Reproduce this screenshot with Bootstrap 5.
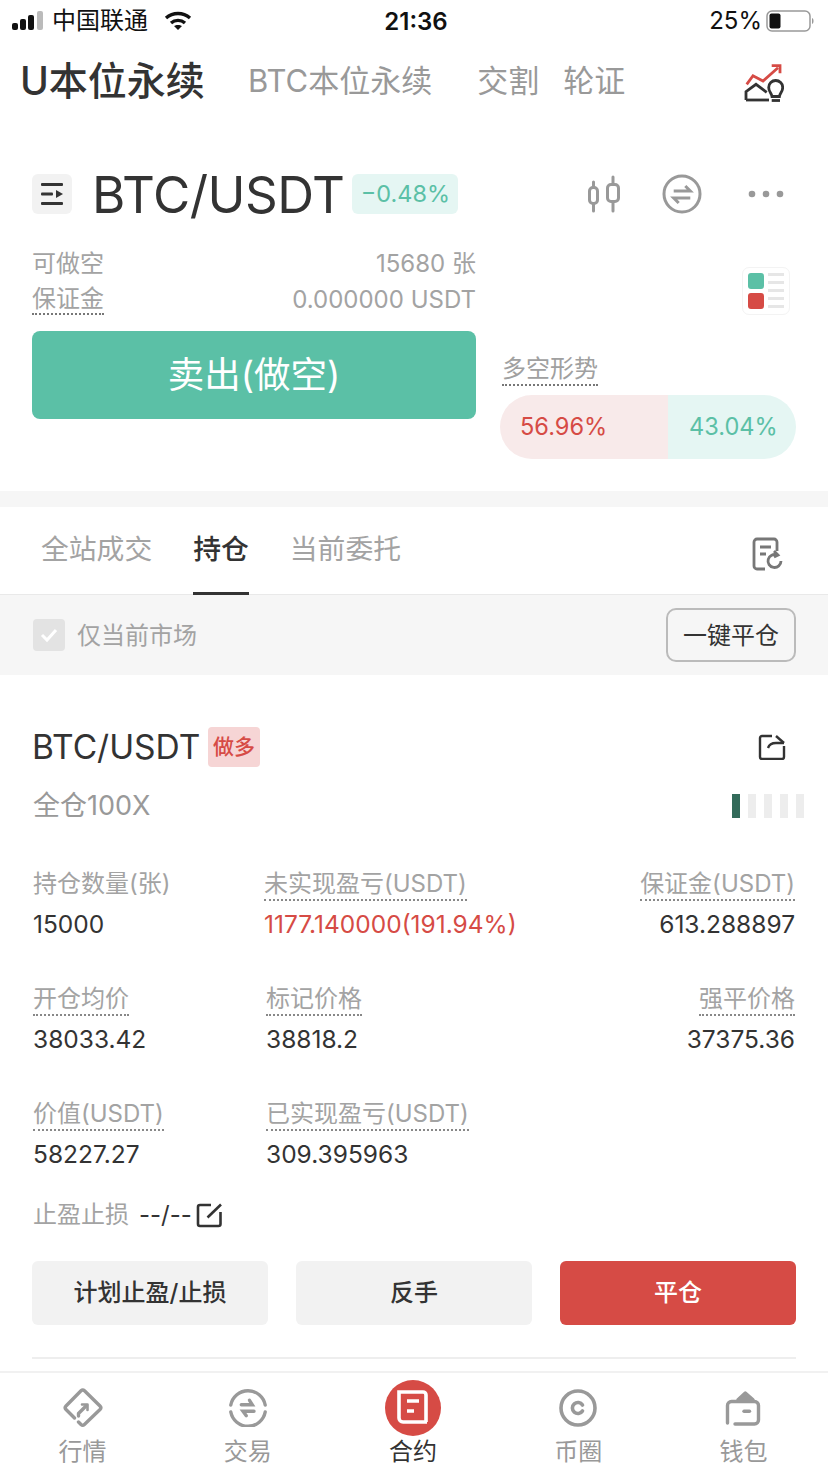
<!DOCTYPE html>
<html lang="zh">
<head>
  <meta charset="UTF-8">
  <title>BTC/USDT</title>
  <link href="https://cdn.jsdelivr.net/npm/bootstrap@5.3.2/dist/css/bootstrap.min.css" rel="stylesheet">
  <style>
    body { margin: 0; width: 828px; height: 1472px; overflow: hidden; background: #fff; color: #333;
      font-family: Inter, "Noto Sans CJK SC", sans-serif; }
    .status-bar { height: 42px; padding: 0 12px; font-size: 24px; color: #111; }
    .status-time { position: absolute; left: 4px; right: 0; text-align: center; font-weight: 600; top: 4px; }
    .top-tabs { height: 78px; padding: 0 44px 0 20px; }
    .top-main { font-size: 39px; font-weight: 500; color: #333; width: 228px; white-space: nowrap; }
    .top-sub { font-size: 31px; color: #999; white-space: nowrap; }
    .top-gap-a { margin-left: 45px; }
    .top-gap-b { margin-left: 24px; }
    .pair-row { height: 80px; margin-top: 34px; padding: 0 44px 0 32px; }
    .menu-box { width: 40px; height: 40px; background: #f2f2f2; border-radius: 6px; }
    .pair-name { font-size: 51px; margin-left: 20px; color: #333; line-height: 1; letter-spacing: -.5px; }
    .chg-badge { margin-left: 8px; width: 106px; height: 40px; background: #e5f6f3; color: #5bc0a6; border-radius: 6px; font-size: 23.500px; }
    .ico-swap { margin-left: 40px; }
    .ico-more { margin-left: 46px; }
    .trade-area { height: 257px; padding: 12px 32px 0; }
    .trade-left { width: 444px; }
    .info-row { height: 36px; font-size: 24px; color: #a3a3a3; }
    .dot-label { border-bottom: 2px dotted #777; line-height: 1.2; }
    .sell-btn { width: 444px; height: 88px; margin-top: 13px; background: #5bc0a6; color: #fff; border: 0; border-radius: 8px; font-size: 36.500px; }
    .legend-box { width: 48px; height: 48px; border: 1px solid #f3f3f3; border-radius: 7px; margin-left: auto; margin-top: 21px; margin-right: 6px; padding: 5px; }
    .legend-sq { width: 16px; height: 16px; border-radius: 3px; }
    .sq-green { background: #5bc0a6; }
    .sq-red { background: #d64b45; }
    .legend-lines { width: 16px; }
    .legend-lines span { display: block; height: 3px; margin-bottom: 5px; background: #e6e6e6; }
    .ratio-title { display: inline-block; font-size: 24px; color: #a0a0a0; margin-top: 40px; margin-left: 2px; line-height: 1.2; }
    .ratio-bar { width: 296px; height: 64px; margin-top: 9px; border-radius: 32px; overflow: hidden; font-size: 23.600px; }
    .ratio-long { width: 168px; background: #f8eaea; color: #d64b45; padding-left: 20px; }
    .ratio-short { width: 128px; background: #e5f6f3; color: #5bc0a6; padding-left: 21px; }
    .gap-band { height: 16px; background: #f6f6f6; }
    .list-tabs { height: 88px; padding: 0 44px 0 41px; border-bottom: 1px solid #e9e9e9; gap: 41px; }
    .list-tab { font-size: 27.800px; color: #a3a3a3; height: 88px; line-height: 84px; }
    .list-tab.on { color: #333; font-weight: 500; border-bottom: 3px solid #333; }
    .ico-record { margin-top: 30px; }
    .filter-strip { height: 80px; background: #f6f6f6; padding: 0 32px 0 33px; }
    .check-box { width: 32px; height: 32px; background: #e3e3e3; border-radius: 4px; }
    .filter-text { font-size: 24px; color: #a3a3a3; margin-left: 12px; padding-top: 2px; }
    .close-all { width: 130px; height: 54px; border: 2px solid #bbb; border-radius: 10px; background: transparent; font-size: 24px; color: #333; padding: 1px 0 0; }
    .pos-wrap { padding: 0 32px; }
    .pos-head { height: 40px; margin-top: 52px; }
    .pos-name { font-size: 33.500px; width: 176px; white-space: nowrap; }
    .long-tag { width: 52px; height: 40px; background: #f6d5d5; color: #d64b45; border-radius: 4px; font-size: 21px; font-weight: 500; }
    .ico-share { margin-right: 10px; }
    .pos-lev { height: 40px; margin-top: 19px; font-size: 27px; color: #999; padding-left: 1px; margin-right: -8px; }
    .lev-bars span { display: block; width: 8px; height: 24px; margin-left: 8px; background: #ededed; }
    .lev-bars span.on { background: #336b5a; }
    .cell-rows { margin-top: 39px; }
    .cell-row { height: 115px; font-size: 24.500px; padding: 0 1px; }
    .cell-a { width: 233px; }
    .cell-a.first { width: 231px; }
    .cell-label { display: inline-block; color: #a3a3a3; line-height: 1.2; border-bottom: 2px dotted #888; font-size: 24px; }
    .cell-label.plain { border-bottom: 0; }
    .cell-val { margin-top: 7px; line-height: 30px; color: #333; }
    .txt-red { color: #d64b45; }
    .stop-row { height: 40px; margin-top: -15px; font-size: 24px; padding-left: 1px; color: #a3a3a3; }
    .stop-val { margin-left: 10px; color: #333; }
    .act-btn { width: 236px; height: 64px; background: #f2f2f2; border: 0; border-radius: 6px; font-size: 24px; font-weight: 500; color: #333; padding: 0; }
    .act-btn.red { background: #d64b45; color: #fff; }
    .act-row { margin-top: 26px; }
    .end-line { height: 2px; background: #eee; margin-top: 32px; }
    .tab-bar { height: 100px; margin-top: 12px; padding-right: 2px; border-top: 2px solid #f1f1f1; }
    .tab-item { flex: 1; font-size: 24px; color: #999; }
    .tab-item.on { color: #333; }
    .tab-ico { height: 62px; padding-top: 8px; }
    .tab-item span { line-height: 26px; display: block; margin-top: 4px; }
  </style>
</head>
<body>

  <div class="status-bar d-flex align-items-center position-relative">
    <svg width="32" height="20" viewBox="0 0 32 20"><g fill="#111"><rect x="0" y="12" width="6" height="7" rx="2"/><rect x="8" y="8" width="6" height="11" rx="2"/><rect x="16" y="4" width="6" height="15" rx="2"/></g><rect x="25" y="0" width="6" height="19" rx="2" fill="#bbb"/></svg>
    <span class="ms-2">中国联通</span>
    <svg class="ms-3" width="28" height="20" viewBox="0 0 28 20" fill="none" stroke="#111" stroke-width="3.400"><path d="M2 7c7-6 17-6 24 0"/><path d="M7 12c4-3.500 10-3.500 14 0"/><path d="M14 19l-4-4c2-1.500 6-1.500 8 0z" fill="#111" stroke="none"/></svg>
    <div class="status-time">21:36</div>
    <span class="ms-auto">25%</span>
    <svg class="ms-1" width="50" height="24" viewBox="0 0 50 24"><rect x="1" y="2" width="43" height="20" rx="5" fill="none" stroke="#999" stroke-width="1.500"/><rect x="3.500" y="4.500" width="11" height="15" rx="2" fill="#111"/><path d="M46 9c2 .5 2 5.500 0 6z" fill="#999"/></svg>
  </div>

  <div class="top-tabs d-flex align-items-center">
    <div class="top-main">U本位永续</div>
    <div class="top-sub">BTC本位永续</div>
    <div class="top-sub top-gap-a">交割</div>
    <div class="top-sub top-gap-b">轮证</div>
    <svg class="ms-auto" width="40" height="42" viewBox="0 0 40 42" fill="none" stroke-width="2.800">
      <path d="M2.700 24.300L9 15.700l10 5.300L34 7.700" stroke="#d64b45"/><path d="M27.700 5.700H36v7.600" stroke="#d64b45"/>
      <path d="M2 40V31.700l10-7.400 10.700 8" stroke="#333"/><path d="M2 40h23" stroke="#333"/>
      <path d="M28 36.500c-.5-3.500-3.300-4.500-3.300-9a7 7 0 0 1 14 0c0 4.500-2.800 5.500-3.300 9z" stroke="#333"/><path d="M27.700 40.500H36" stroke="#333"/>
    </svg>
  </div>

  <div class="pair-row d-flex align-items-center">
    <div class="menu-box d-flex align-items-center justify-content-center">
      <svg width="24" height="24" viewBox="0 0 24 24"><g fill="#333"><rect x="1" y="1" width="22" height="3" rx="1"/><rect x="1" y="10.500" width="12" height="3" rx="1"/><rect x="1" y="20" width="22" height="3" rx="1"/><path d="M16 8l7 4-7 4z"/></g></svg>
    </div>
    <div class="pair-name">BTC/USDT</div>
    <div class="chg-badge d-flex align-items-center justify-content-center">−0.48%</div>
    <svg class="ms-auto" width="36" height="38" viewBox="0 0 36 38" fill="none" stroke="#999" stroke-width="3" stroke-linecap="round"><rect x="3.500" y="12.500" width="8" height="16" rx="3.500"/><rect x="21.500" y="9.500" width="11" height="17" rx="3.500"/><path d="M7.500 7v5.500M7.500 28.500V36M27 2v7.500M27 26.500V36"/></svg>
    <svg class="ico-swap" width="40" height="40" viewBox="0 0 40 40" fill="none" stroke="#999" stroke-width="3"><circle cx="20" cy="20" r="18"/><path d="M11.700 17h16.600l-5-5M28.300 24H11.700l5 5"/></svg>
    <svg class="ico-more" width="36" height="8" viewBox="0 0 36 8" fill="#999"><circle cx="4" cy="4" r="3.300"/><circle cx="18" cy="4" r="3.300"/><circle cx="32" cy="4" r="3.300"/></svg>
  </div>

  <div class="trade-area d-flex">
    <div class="trade-left">
      <div class="info-row d-flex justify-content-between align-items-center"><span>可做空</span><span>15680 张</span></div>
      <div class="info-row d-flex justify-content-between align-items-center"><span class="dot-label">保证金</span><span>0.000000 USDT</span></div>
      <button class="sell-btn d-block">卖出(做空)</button>
    </div>
    <div class="flex-fill ps-4">
      <div class="legend-box d-flex flex-wrap">
        <div class="d-flex flex-column gap-1 me-1">
          <div class="legend-sq sq-green"></div>
          <div class="legend-sq sq-red"></div>
        </div>
        <div class="legend-lines"><span></span><span></span><span></span><span></span><span></span></div>
      </div>
      <span class="ratio-title dot-label">多空形势</span>
      <div class="ratio-bar d-flex">
        <div class="ratio-long d-flex align-items-center">56.96%</div>
        <div class="ratio-short d-flex align-items-center">43.04%</div>
      </div>
    </div>
  </div>

  <div class="gap-band"></div>

  <div class="list-tabs d-flex align-items-start">
    <div class="list-tab">全站成交</div>
    <div class="list-tab on">持仓</div>
    <div class="list-tab">当前委托</div>
    <svg class="ms-auto ico-record" width="32" height="34" viewBox="0 0 32 34" fill="none" stroke="#777" stroke-width="2.800"><path d="M13 32H5a3 3 0 0 1-3-3V5a3 3 0 0 1 3-3h17a3 3 0 0 1 3 3v9"/><path d="M8 10h11M8 17h6"/><path d="M29 24a6.500 6.500 0 1 1-4-6"/><path d="M22 14l4 4-4 2" /></svg>
  </div>

  <div class="filter-strip d-flex align-items-center">
    <div class="check-box d-flex align-items-center justify-content-center">
      <svg width="20" height="16" viewBox="0 0 20 16" fill="none" stroke="#fff" stroke-width="3"><path d="M3 8l5 5 9-10"/></svg>
    </div>
    <div class="filter-text">仅当前市场</div>
    <button class="close-all ms-auto">一键平仓</button>
  </div>

  <div class="pos-wrap">
    <div class="pos-head d-flex align-items-center">
      <div class="pos-name">BTC/USDT</div>
      <div class="long-tag d-flex align-items-center justify-content-center">做多</div>
      <svg class="ms-auto ico-share" width="28" height="26" viewBox="0 0 28 26" fill="none" stroke="#333" stroke-width="2.400"><path d="M14 2H4a2 2 0 0 0-2 2v19a2 2 0 0 0 2 2h20a2 2 0 0 0 2-2V12"/><path d="M10 14c1-3 4-5 8-5h8"/><path d="M18 2l8 7"/></svg>
    </div>
    <div class="pos-lev d-flex align-items-center justify-content-between">
      <div>全仓100X</div>
      <div class="lev-bars d-flex"><span class="on"></span><span></span><span></span><span></span><span></span></div>
    </div>

    <div class="cell-rows">
      <div class="cell-row d-flex">
        <div class="cell-a first"><span class="cell-label plain">持仓数量(张)</span><div class="cell-val">15000</div></div>
        <div class="flex-fill"><span class="cell-label">未实现盈亏(USDT)</span><div class="cell-val txt-red">1177.140000(191.94%)</div></div>
        <div class="text-end"><span class="cell-label">保证金(USDT)</span><div class="cell-val">613.288897</div></div>
      </div>
      <div class="cell-row d-flex">
        <div class="cell-a"><span class="cell-label">开仓均价</span><div class="cell-val">38033.42</div></div>
        <div class="flex-fill"><span class="cell-label">标记价格</span><div class="cell-val">38818.2</div></div>
        <div class="text-end"><span class="cell-label">强平价格</span><div class="cell-val">37375.36</div></div>
      </div>
      <div class="cell-row d-flex">
        <div class="cell-a"><span class="cell-label">价值(USDT)</span><div class="cell-val">58227.27</div></div>
        <div class="flex-fill"><span class="cell-label">已实现盈亏(USDT)</span><div class="cell-val">309.395963</div></div>
      </div>
    </div>

    <div class="stop-row d-flex align-items-center">
      <span>止盈止损</span>
      <span class="stop-val">--/--</span>
      <svg class="ms-1" width="26" height="26" viewBox="0 0 26 26" fill="none" stroke="#333" stroke-width="2.600"><path d="M15 3H4a2 2 0 0 0-2 2v17a2 2 0 0 0 2 2h18.500a2 2 0 0 0 2-2V10"/><path d="M11.500 15.500L25 2.500"/></svg>
    </div>

    <div class="act-row d-flex justify-content-between">
      <button class="act-btn">计划止盈/止损</button>
      <button class="act-btn">反手</button>
      <button class="act-btn red">平仓</button>
    </div>
    <div class="end-line"></div>
  </div>

  <div class="tab-bar d-flex">
    <div class="tab-item text-center">
      <div class="tab-ico d-flex align-items-center justify-content-center">
        <svg width="40" height="40" viewBox="0 0 40 40" fill="none" stroke="#999" stroke-width="3.400" stroke-linejoin="round" stroke-linecap="round"><path d="M15.500 34l2.500 2.500a2.500 2.500 0 0 0 3.400 0L37 21.500a2.500 2.500 0 0 0 0-3.500L21.500 2.800a2.500 2.500 0 0 0-3.500 0L3 18a2.500 2.500 0 0 0 0 3.500L11.500 30"/><path d="M15.500 28v-2.500L23.500 17.500"/><path d="M19 16.500h5.500V22" stroke-width="2.600"/></svg>
      </div>
      <span>行情</span>
    </div>
    <div class="tab-item text-center">
      <div class="tab-ico d-flex align-items-center justify-content-center">
        <svg width="38" height="38" viewBox="0 0 38 38" fill="none" stroke="#999" stroke-width="3.400" stroke-linecap="round"><path d="M1.800 16A17.500 17.500 0 0 1 36.200 16M1.800 23A17.500 17.500 0 0 0 36.200 23"/><path d="M12.300 15.700h11l-2.800-4.400M25 22.300H14l3.300 4.400"/></svg>
      </div>
      <span>交易</span>
    </div>
    <div class="tab-item on text-center">
      <div class="tab-ico d-flex align-items-center justify-content-center">
        <svg width="56" height="56" viewBox="0 0 56 56" fill="none"><circle cx="28" cy="28" r="28" fill="#d64b45"/><path d="M42 42H18a4 4 0 0 1-4-4V12h24a3 3 0 0 1 3 3v27" stroke="#fff" stroke-width="3.600"/><path d="M22 21h12M22 31h7" stroke="#fff" stroke-width="3.600"/></svg>
      </div>
      <span>合约</span>
    </div>
    <div class="tab-item text-center">
      <div class="tab-ico d-flex align-items-center justify-content-center">
        <svg width="38" height="38" viewBox="0 0 38 38" fill="none" stroke="#999" stroke-width="3.600"><circle cx="19" cy="19" r="17"/><path d="M23.500 16a5.500 5.500 0 1 0 0 6" stroke-width="3.600" stroke-linecap="round"/></svg>
      </div>
      <span>币圈</span>
    </div>
    <div class="tab-item text-center">
      <div class="tab-ico d-flex align-items-center justify-content-center">
        <svg width="36" height="36" viewBox="0 0 36 36" fill="none" stroke="#999" stroke-width="3.400" stroke-linecap="round" stroke-linejoin="round"><path d="M2.500 33V15.500a4 4 0 0 1 4-4h23a4 4 0 0 1 4 4V30a4 4 0 0 1-4 4H10"/><path d="M13 9.700L20.300 3 28 9.700z" fill="#999"/><path d="M19 21.300h5.500"/></svg>
      </div>
      <span>钱包</span>
    </div>
  </div>

  <script src="https://cdn.jsdelivr.net/npm/bootstrap@5.3.2/dist/js/bootstrap.bundle.min.js"></script>
</body>
</html>
